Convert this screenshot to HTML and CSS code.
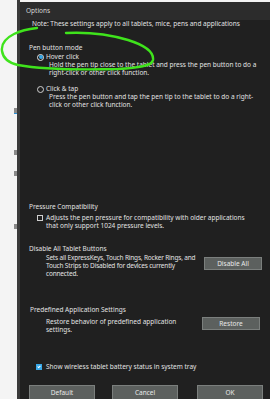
FILE: index.html
```html
<!DOCTYPE html>
<html lang="en">
<head>
  <meta charset="UTF-8" />
  <title>Options</title>
  <link rel="stylesheet" href="styles.css">
</head>
<body>
  <div class="screen">
    <div class="backdrop">
      <div class="backdrop-page">
        <span class="mark m1"></span>
        <span class="mark m2"></span>
        <span class="mark m3"></span>
        <span class="mark m4"></span>
      </div>
      <div class="backdrop-edge"></div>
    </div>

    <div class="dialog">
      <header class="titlebar"><span class="title-text">Options</span></header>

      <div class="content">
        <div class="note">Note: These settings apply to all tablets, mice, pens and applications</div>

        <!-- Pen button mode -->
        <div class="group-label pen-label">Pen button mode</div>
        <div class="option first-option">
          <span class="radio checked"><span class="radio-dot"></span></span>
          <span>Hover click</span>
        </div>
        <div class="desc">Hold the pen tip close to the tablet and press the pen button to do a right-click or other click function.</div>

        <div class="option second-option">
          <span class="radio"></span>
          <span>Click &amp; tap</span>
        </div>
        <div class="desc">Press the pen button and tap the pen tip to the tablet to do a right-click or other click function.</div>

        <!-- Pressure -->
        <div class="group-label pressure-label">Pressure Compatibility</div>
        <div class="check-row">
          <span class="checkbox"></span>
          <span class="check-text">Adjusts the pen pressure for compatibility with older applications that only support 1024 pressure levels.</span>
        </div>

        <!-- Disable buttons -->
        <div class="group-label disable-label">Disable All Tablet Buttons</div>
        <div class="action-row">
          <div class="action-text tight">Sets all ExpressKeys, Touch Rings, Rocker Rings, and Touch Strips to Disabled for devices currently connected.</div>
          <div class="btn action-btn">Disable All</div>
        </div>

        <!-- Predefined -->
        <div class="group-label predefined-label">Predefined Application Settings</div>
        <div class="action-row restore-row">
          <div class="action-text">Restore behavior of predefined application settings.</div>
          <div class="btn action-btn restore-btn">Restore</div>
        </div>

        <div class="check-row battery-row">
          <span class="checkbox on"><span class="tick"></span></span>
          <span class="check-text">Show wireless tablet battery status in system tray</span>
        </div>

        <div class="footer">
          <div class="btn footer-btn">Default</div>
          <div class="btn footer-btn">Cancel</div>
          <div class="btn footer-btn ok-btn">OK</div>
        </div>
      </div>
    </div>
  </div>

  <!-- hand-drawn highlight over the pen mode group -->
  <svg class="scribble" viewBox="0 0 270 399" width="270" height="399">
    <path d="M37 28 C28 29 20 31 14 34 C6 38 1 44 2 51 C3 58 9 63 18 65 C40 69 80 70 118 69 C138 68 152 66 153 60 C154 52 144 45 128 40 C108 34 86 32 66 33"
          fill="none" stroke="#3fe31c" stroke-width="2.4" stroke-linecap="round"/>
  </svg>
</body>
</html>
```

FILE: styles.css
```css
:root {
  --dialog-bg: #202020;
  --title-bg: #2c2c2c;
  --text: #e2e2e2;
  --btn-bg: #5c605e;
  --btn-border: #7b7f7d;
  --accent: #38a8e8;
}

* {
  box-sizing: border-box;
}

html,
body {
  margin: 0;
  height: 399px;
  background-color: #f3f3f3;
}

body {
  font-family: 'Noto Sans', 'Open Sans', sans-serif;
  font-size: 6.5px;
  line-height: 8px;
  color: var(--text);
}

.screen {
  width: 270px;
  height: 399px;
  display: flex;
}

/* window behind the dialog */
.backdrop {
  width: 20px;
  flex-shrink: 0;
  display: flex;
}

.backdrop-page {
  width: 17px;
  background-color: #f4f4f4;
  display: flex;
  flex-direction: column;
  align-items: flex-end;
}

.mark {
  width: 3px;
  height: 5px;
  background-color: #8a8a8a;
}

.mark.m1 { margin-top: 108px; border-bottom: 1px solid #2a8fd6; height: 6px; }
.mark.m2 { margin-top: 36px; }
.mark.m3 { margin-top: 16px; }
.mark.m4 { margin-top: 48px; }

.backdrop-edge {
  width: 3px;
  background-color: #3a3a3a;
}

.dialog {
  flex: 1;
  margin-top: 2px;
  height: 397px;
  background-color: var(--dialog-bg);
}

.titlebar {
  height: 18px;
  padding: 5px 0 0 6px;
  background-color: var(--title-bg);
  color: #d8d8d8;
}

.content {
  padding-left: 9px;
}

.note {
  padding-left: 3px;
}

.pen-label { margin-top: 16px; }
.pressure-label { margin-top: 94px; }
.disable-label { margin-top: 15px; }
.predefined-label { margin-top: 28px; padding-left: 1px; }

.option {
  display: flex;
  align-items: center;
  gap: 2px;
  padding-left: 8px;
}

.first-option { margin-top: 1px; }
.second-option { margin-top: 8px; }

.radio {
  width: 7px;
  height: 7px;
  border-radius: 50%;
  border: 1px solid #d0d0d0;
  flex-shrink: 0;
  display: flex;
  align-items: center;
  justify-content: center;
}

.radio.checked {
  border-color: #e8e8e8;
  background-color: #1a1a1a;
}

.radio-dot {
  width: 4px;
  height: 4px;
  border-radius: 50%;
  background-color: var(--accent);
}

.desc {
  padding-left: 20px;
  padding-right: 6px;
}

.check-row {
  display: flex;
  align-items: flex-start;
  gap: 3px;
  padding-left: 8px;
  margin-top: 3px;
}

.checkbox {
  width: 6px;
  height: 6px;
  margin-top: 1px;
  border: 1px solid #cfcfcf;
  flex-shrink: 0;
  display: flex;
  justify-content: center;
}

.checkbox.on {
  background-color: var(--accent);
  border-color: var(--accent);
}

.tick {
  width: 2px;
  height: 3px;
  border-right: 1px solid #fff;
  border-bottom: 1px solid #fff;
  transform: rotate(45deg);
}

.check-text {
  padding-right: 12px;
}

.action-row {
  display: flex;
  align-items: flex-start;
  padding-left: 17px;
  margin-top: 1px;
}

.action-text {
  width: 158px;
  flex-shrink: 0;
}

.action-text.tight {
  letter-spacing: -0.18px;
}

.restore-row .action-text {
  width: 156px;
  padding-top: 1px;
}

.btn {
  display: flex;
  align-items: center;
  justify-content: center;
  color: #e8e8e8;
  background-color: var(--btn-bg);
  border: 1px solid var(--btn-border);
}

.action-btn {
  width: 58px;
  height: 13px;
  margin-top: 3px;
}

.restore-row {
  margin-top: 3px;
}

.restore-btn {
  margin-top: 0;
}

.battery-row {
  margin-top: 29px;
  padding-left: 7px;
  gap: 4px;
}

.footer {
  display: flex;
  gap: 17px;
  margin-top: 14px;
}

.footer-btn {
  width: 66px;
  height: 16px;
}

.ok-btn {
  margin-left: 2px;
}

.scribble {
  position: absolute;
  left: 0;
  top: 0;
  pointer-events: none;
}
```
